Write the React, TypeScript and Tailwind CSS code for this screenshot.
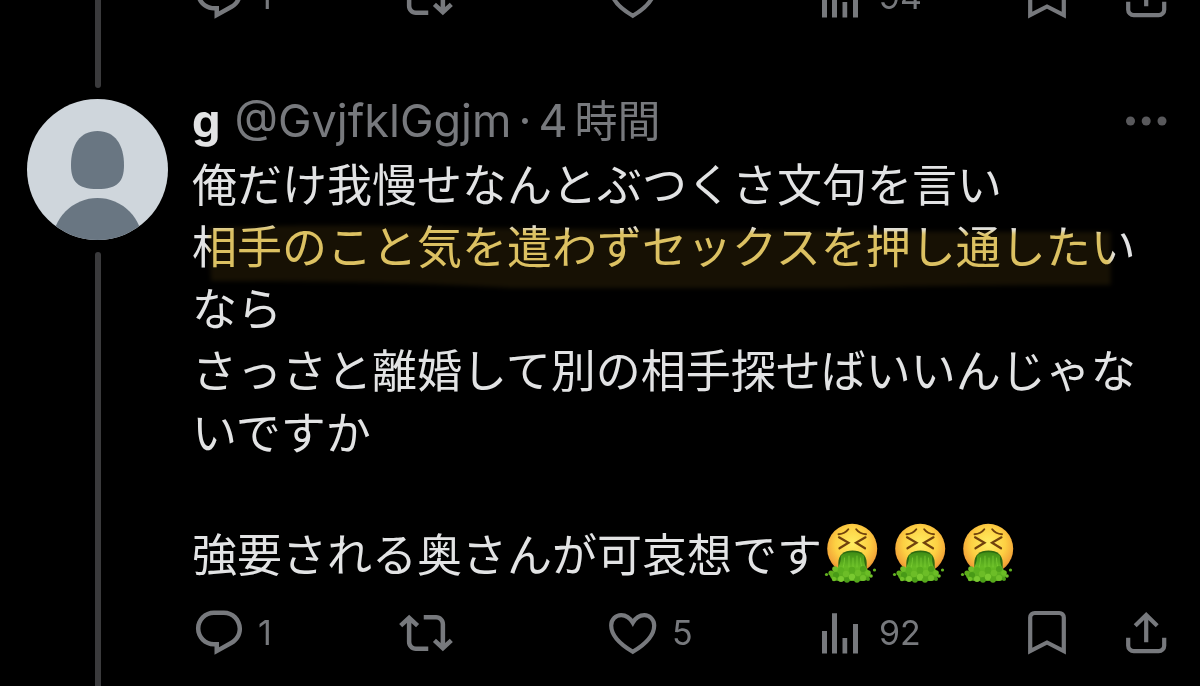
import type { ReactNode } from "react";

type Post = {
  replies?: number;
  likes?: number;
  views?: number;
};

function Icon({ children }: { children: ReactNode }) {
  return (
    <svg viewBox="0 0 54 54" className="size-[54px] shrink-0" fill="none" aria-hidden="true">
      {children}
    </svg>
  );
}

function ReplyIcon() {
  return (
    <Icon>
      <path
        transform="scale(2.25)"
        fill="currentColor"
        d="M1.751 10c0-4.42 3.584-8 8.005-8h4.366c4.49 0 8.129 3.64 8.129 8.13 0 2.96-1.607 5.68-4.196 7.11l-8.054 4.46v-3.69h-.067c-4.49.1-8.183-3.51-8.183-8.01zm8.005-6c-3.317 0-6.005 2.69-6.005 6 0 3.37 2.77 6.08 6.138 6.01l.351-.01h1.761v2.3l5.087-2.81c1.951-1.08 3.163-3.13 3.163-5.36 0-3.39-2.744-6.13-6.129-6.13H9.756z"
      />
    </Icon>
  );
}

function RepostIcon() {
  return (
    <Icon>
      <path
        transform="scale(2.25)"
        fill="currentColor"
        d="M4.5 3.88l4.432 4.14-1.364 1.46L5.5 7.55V16c0 1.1.896 2 2 2H13v2H7.5c-2.209 0-4-1.79-4-4V7.55L1.432 9.48.068 8.02 4.5 3.88zM16.5 6H11V4h5.5c2.209 0 4 1.79 4 4v8.45l2.068-1.93 1.364 1.46-4.432 4.14-4.432-4.14 1.364-1.46 2.068 1.93V8c0-1.1-.896-2-2-2z"
      />
    </Icon>
  );
}

function LikeIcon() {
  return (
    <Icon>
      <path
        stroke="currentColor"
        strokeWidth="4.2"
        d="M26.8 45.8C18 40.6 5.2 31 5.2 19.5 5.2 13.5 9.8 9.2 15.2 9.2c4.8 0 8.8 2.8 11.6 7.6C29.5 12 33.5 9.2 38.3 9.2c5.4 0 9.9 4.3 9.9 10.3C48.2 31 35.5 40.6 26.8 45.8Z"
      />
    </Icon>
  );
}

function ViewsIcon() {
  return (
    <Icon>
      <path fill="currentColor" d="M9 25h5v22.5H9zM19 7.3h5v40.2h-5zM29.5 32h4.7v15.5h-4.7zM40 18h5v29.5h-5z" />
    </Icon>
  );
}

function BookmarkIcon() {
  return (
    <Icon>
      <path
        stroke="currentColor"
        strokeWidth="4.2"
        d="M10.2 45V11.500a4.500 4.500 0 0 1 4.500-4.500h24.600a4.500 4.500 0 0 1 4.500 4.500V45L27 36.500Z"
      />
    </Icon>
  );
}

function ShareIcon() {
  return (
    <Icon>
      <path
        stroke="currentColor"
        strokeWidth="4.2"
        d="M27.2 36.3V9.5M16.2 19.8l11-10.8 11 10.8M9.2 31.7v8a5.5 5.5 0 0 0 5.5 5.5h25a5.5 5.5 0 0 0 5.5-5.5v-8"
      />
    </Icon>
  );
}

function Action({ label, count, children }: { label: string; count?: number; children: ReactNode }) {
  return (
    <button type="button" aria-label={label} className="flex items-center gap-3 text-[34px] leading-[54px]">
      {children}
      {count !== undefined && <span>{count}</span>}
    </button>
  );
}

function Actions({ replies, likes, views }: Post) {
  return (
    <div className="grid grid-cols-[207fr_207fr_207fr_207fr_153fr] text-[#77797d]">
      <Action label="返信" count={replies}>
        <ReplyIcon />
      </Action>
      <Action label="リポスト">
        <RepostIcon />
      </Action>
      <Action label="いいね" count={likes}>
        <LikeIcon />
      </Action>
      <Action label="表示" count={views}>
        <ViewsIcon />
      </Action>
      <div className="flex justify-between">
        <Action label="ブックマーク">
          <BookmarkIcon />
        </Action>
        <Action label="共有">
          <ShareIcon />
        </Action>
      </div>
    </div>
  );
}

function Avatar() {
  return (
    <svg viewBox="0 0 141 141" className="size-[141px] shrink-0" role="img" aria-label="g">
      <defs>
        <clipPath id="avatar">
          <circle cx="70.5" cy="70.5" r="70.5" />
        </clipPath>
      </defs>
      <g clipPath="url(#avatar)">
        <rect width="141" height="141" fill="#cfd6dc" />
        <path fill="#697682" d="M70.5 32C88 32 97 46 97 66c0 16-6 24-26.5 24S44 82 44 66c0-20 9-34 26.5-34Z" />
        <circle cx="70.5" cy="144" r="45" fill="#697682" />
      </g>
    </svg>
  );
}

// x, y, radius, shade
const chunks: [number, number, number, string][] = [
  [7, 51, 2.6, "#5fae1c"],
  [11, 47, 2.8, "#6fbd28"],
  [12, 53, 3, "#489a17"],
  [10, 57, 2.2, "#6fc027"],
  [17, 48, 3, "#5cb01f"],
  [17, 57, 3, "#79c930"],
  [22, 52, 3.2, "#6cbd27"],
  [23, 58, 2.8, "#4c9f18"],
  [28, 48, 3.2, "#58ab1d"],
  [28, 55, 3.2, "#79c930"],
  [33, 58, 2.8, "#57a91c"],
  [34, 51, 3.2, "#6cbd27"],
  [39, 47, 3, "#4fa11a"],
  [39, 56, 3, "#70c02a"],
  [44, 51, 2.8, "#6bbd25"],
  [44, 57, 2, "#4d9e19"],
  [47, 54, 1.8, "#70c02a"],
  [2.5, 52.5, 1.6, "#63b321"],
  [50.5, 48, 1.6, "#63b321"],
];

function VomitEmoji() {
  return (
    <svg viewBox="0 0 54 62" className="h-[62px] w-[54px] shrink-0" fill="none" role="img" aria-label="🤮">
      <defs>
        <radialGradient id="face" cx="0.5" cy="0.4" r="0.62">
          <stop offset="0" stopColor="#ffee62" />
          <stop offset="0.55" stopColor="#fdd043" />
          <stop offset="0.85" stopColor="#f3a638" />
          <stop offset="1" stopColor="#d9822b" />
        </radialGradient>
        <linearGradient id="stream" x1="0" y1="0" x2="0" y2="1">
          <stop offset="0" stopColor="#3f8d15" />
          <stop offset="0.5" stopColor="#66ba24" />
          <stop offset="1" stopColor="#55a61b" />
        </linearGradient>
      </defs>
      <circle cx="28.2" cy="26.8" r="25" fill="url(#face)" />
      <g stroke="#70420d" strokeWidth="1.9" strokeLinecap="round">
        <path d="M14.5 12.3c4.3-.3 7.5-1.8 9.8-5M42 12.3c-4.3-.3-7.5-1.8-9.8-5" />
        <path strokeWidth="2.2" d="M15 15.3l9.5 5.4-9 5.6M41.5 15.3l-9.5 5.4 9 5.6" />
      </g>
      <path fill="#2c6a10" d="M14.3 41c0-8 5.5-12.5 14.2-12.5S42.7 33 42.7 41v8H14.300Z" />
      <path
        fill="url(#stream)"
        d="M17 34c4-5 19-5 23 0 0 7 1 12 6 16 1 6-3 9-8 9H15c-6 0-10-3-9-8 8-3 11-9 11-17Z"
      />
      <path
        stroke="#7fd036"
        strokeOpacity="0.7"
        strokeLinecap="round"
        d="M20.500 36c0 5-1 8-2 11M25 34v11M29 36v9M33 34v11M36.500 36c0 5 1 8 2 11"
      />
      {chunks.map(([x, y, r, fill]) => (
        <circle key={`${x}-${y}`} cx={x} cy={y} r={r} fill={fill} />
      ))}
    </svg>
  );
}

// Marker stroke drawn over the text: multiply tints the glyphs, screen tints the black behind them
function Marked({ children }: { children: ReactNode }) {
  const stroke = "M17 14Q150 9 300 14Q600 18 920 18V71Q760 71 650 74H320Q200 67 19 67Z";
  return (
    <mark className="relative inline-block bg-transparent text-inherit">
      {children}
      <svg
        viewBox="0 0 945 84"
        preserveAspectRatio="none"
        className="pointer-events-none absolute top-0 left-0 h-[84px] w-full mix-blend-multiply"
        aria-hidden="true"
      >
        <path d={stroke} fill="#f5d56a" className="blur-[2px]" />
      </svg>
      <svg
        viewBox="0 0 945 84"
        preserveAspectRatio="none"
        className="pointer-events-none absolute top-0 left-0 h-[84px] w-full mix-blend-screen"
        aria-hidden="true"
      >
        <path d={stroke} fill="#171104" className="blur-[2px]" />
      </svg>
    </mark>
  );
}

export default function App() {
  return (
    <main
      lang="ja"
      className="flex min-h-screen flex-col bg-black font-['Inter','Noto_Sans_CJK_JP',sans-serif] text-[#e2e3e4]"
    >
      <article className="flex gap-6 px-[27px]">
        <div className="flex h-[88px] w-[141px] shrink-0 justify-center">
          <div className="w-[6px] rounded-b-full bg-[#3a3a3c]" />
        </div>
        <div className="flex h-6 min-w-0 flex-1 flex-col justify-end overflow-hidden">
          <Actions replies={1} views={94} />
        </div>
      </article>

      <article className="flex flex-1 gap-6 px-[27px]">
        <div className="flex w-[141px] shrink-0 flex-col items-center gap-3 pt-[11px]">
          <Avatar />
          <div className="w-[6px] flex-1 rounded-t-full bg-[#3a3a3c]" />
        </div>
        <div className="min-w-0 flex-1 pt-[2px]">
          <header className="flex items-center text-[45px] leading-[62px]">
            <span className="font-bold">g</span>
            <span className="ml-[14px] text-[#77797d]">@GvjfklGgjm</span>
            <span className="mx-[7px] text-[#77797d]">·</span>
            <time className="flex gap-[7px] text-[#77797d]">
              <span>4</span>
              <span className="text-[43px]">時間</span>
            </time>
            <button type="button" aria-label="もっと見る" className="ml-auto text-[#59595c]">
              <Icon>
                <circle cx="11.5" cy="27" r="4.5" fill="currentColor" />
                <circle cx="27.2" cy="27" r="4.5" fill="currentColor" />
                <circle cx="43" cy="27" r="4.5" fill="currentColor" />
              </Icon>
            </button>
          </header>
          <div className="font-['Noto_Sans_CJK_JP',sans-serif] text-[45px] leading-[62px]">
            <p>俺だけ我慢せなんとぶつくさ文句を言い</p>
            <p>
              <Marked>相手のこと気を遣わずセックスを押し通したい</Marked>なら
            </p>
            <p>さっさと離婚して別の相手探せばいいんじゃないですか</p>
            <p className="flex pt-[60px]">
              強要される奥さんが可哀想です
              <span className="flex gap-[14px] pl-[2px]">
                <VomitEmoji />
                <VomitEmoji />
                <VomitEmoji />
              </span>
            </p>
          </div>
          <div className="mt-[22px]">
            <Actions replies={1} likes={5} views={92} />
          </div>
        </div>
      </article>
    </main>
  );
}
